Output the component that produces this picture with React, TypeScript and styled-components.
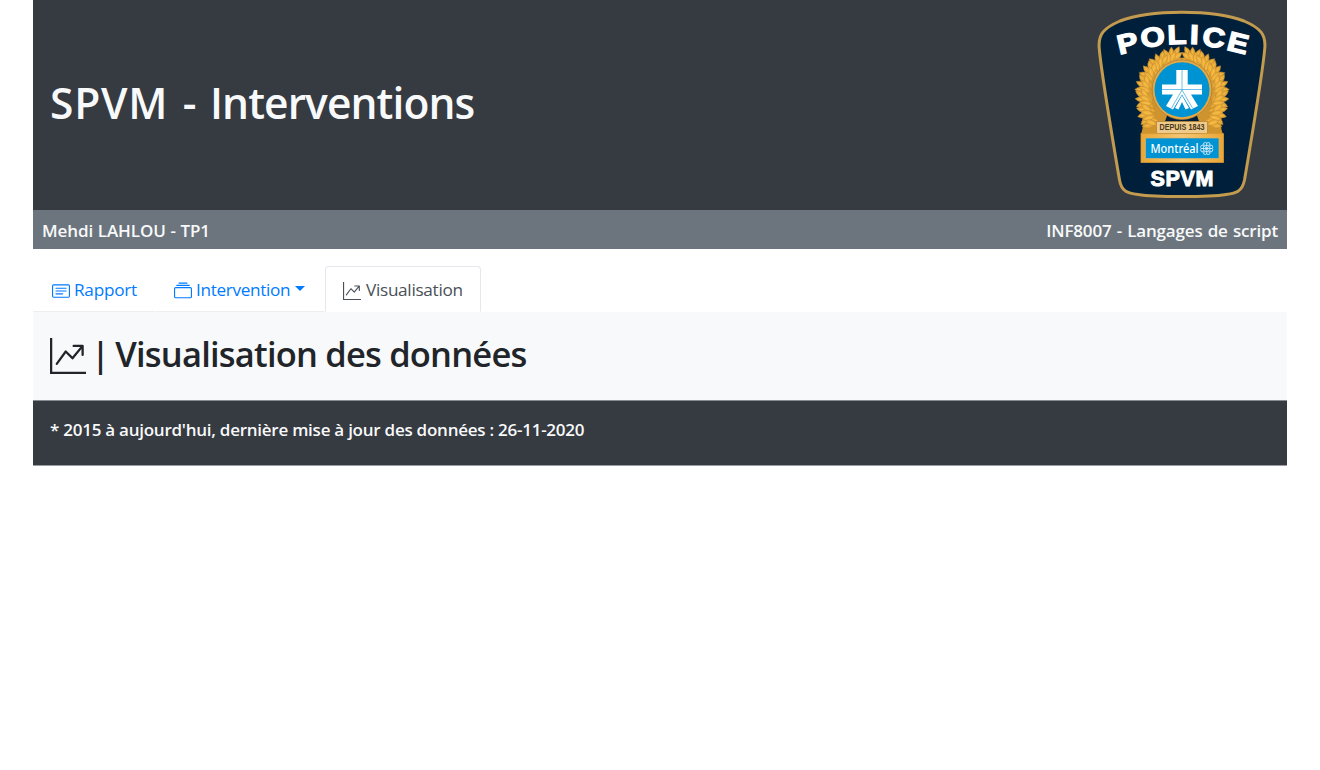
import React from 'react';
import styled, { createGlobalStyle } from 'styled-components';
import { BsCardText, BsCollection, BsGraphUpArrow } from 'react-icons/bs';

const GlobalStyle = createGlobalStyle`
  *, *::before, *::after { box-sizing: border-box; }
  body {
    margin: 0;
    background: #fff;
    color: #212529;
    font-family: 'Open Sans', 'Noto Sans', sans-serif;
    font-size: 17.6px;
    line-height: 1.5;
  }
`;

const Page = styled.div`
  width: 1254px;
  margin-left: 33px;
`;

const Header = styled.header`
  display: flex;
  align-items: center;
  justify-content: space-between;
  height: 210px;
  padding: 0 20px 0 17px;
  background: #363a41;
`;

const Title = styled.h1`
  margin: 0 0 6px;
  color: #f8f9fa;
  font-size: 42.5px;
  font-weight: 600;
  line-height: 1.2;
  white-space: nowrap;
  letter-spacing: -0.9px;
  word-spacing: 4.3px;
`;

const Acronym = styled.span`
  letter-spacing: 0.8px;
`;

const InfoBar = styled.div`
  display: flex;
  align-items: center;
  justify-content: space-between;
  height: 39px;
  padding: 2px 9px 0 9px;
  background: #6c757d;
`;

const Strong = styled.span<{ $spacing: number; $word?: number }>`
  color: #f8f9fa;
  font-size: 17px;
  font-weight: 600;
  white-space: nowrap;
  letter-spacing: ${(p) => p.$spacing}px;
  word-spacing: ${(p) => p.$word ?? 0}px;
`;

const Nav = styled.nav`
  display: flex;
  height: 63px;
  padding-top: 17px;
`;

const Tab = styled.a<{ $active?: boolean; $width: number; $spacing: number }>`
  display: flex;
  align-items: center;
  width: ${(p) => p.$width}px;
  height: 46px;
  padding: 2px 0 0 ${(p) => (p.$active ? 17 : 18)}px;
  border: 1px solid ${(p) => (p.$active ? '#e4e7ec' : 'transparent')};
  border-bottom-color: ${(p) => (p.$active ? 'transparent' : '#eceef0')};
  border-radius: ${(p) => (p.$active ? '4px 4px 0 0' : '0')};
  color: ${(p) => (p.$active ? '#495057' : '#007bff')};
  font-size: 17.2px;
  letter-spacing: ${(p) => p.$spacing}px;
  white-space: nowrap;
  cursor: pointer;

  svg {
    flex: none;
    width: 18px;
    height: 18px;
    margin: 1px ${(p) => (p.$active ? 5 : 4)}px 0 0;
  }
`;

const Caret = styled.span`
  margin: 0 0 4px 5px;
  border: 5.5px solid transparent;
  border-top-color: currentColor;
  border-bottom: 0;
`;

const Content = styled.main`
  display: flex;
  align-items: center;
  height: 89px;
  padding: 0 17px;
  background: #f8f9fb;
  border-bottom: 1px solid #868c91;

  svg {
    flex: none;
    width: 36px;
    height: 36px;
    margin: 0 5px 1px 0;
  }
`;

const Subtitle = styled.h2`
  margin: 0 0 5px;
  font-size: 34.5px;
  font-weight: 600;
  line-height: 1.2;
  white-space: nowrap;
  letter-spacing: -0.8px;
`;

const Bar = styled.span`
  word-spacing: -2px;
`;

const Footer = styled.footer`
  height: 65px;
  padding: 15px 17px 0;
  background: #363a41;
  border-bottom: 1px solid #9b9da0;
`;

const BadgeSvg = styled.svg`
  display: block;
  flex: none;
  width: 170px;
  height: 190px;
`;

/* The badge is drawn in a 170x190 box whose vertical axis is x = 85. */
const letters: [string, number, number, number][] = [
  ['P', 30.5, 33, -13],
  ['O', 55.5, 27, -7],
  ['L', 80, 24.5, -2],
  ['I', 97.5, 24.5, 2],
  ['C', 117, 27.5, 8],
  ['E', 141, 33, 14],
];

const leafRows = [
  { radius: 33, tilt: -85, count: 17, fill: '#dfa031' },
  { radius: 41, tilt: -35, count: 19, fill: '#e6a836' },
  { radius: 37, tilt: -62, count: 19, fill: '#eeb03a' },
];

function Wreath() {
  return (
    <g>
      {[-1, 1].map((side) => (
        <g key={side} transform={`translate(85 83) scale(${side} 1)`}>
          <path d="M4 -39 C26 -40 42 -22 42.500 0 C42.500 18 36 30 41 41 L22 42 L14 20 Z" fill="#d0942f" />
          {leafRows.map((row) =>
            Array.from({ length: row.count }, (_, i) => {
              const angle = -82 + (i * 126) / (row.count - 1);
              const spread = Math.max(0, angle - 15) * 0.2;
              return (
                <g key={`${row.radius}-${i}`} transform={`rotate(${angle}) translate(${row.radius + spread} 0) rotate(${row.tilt + (i % 3) * 20})`}>
                  <path d="M-6 0 Q0 -5.500 6.500 0 Q0 5.500 -6 0Z" fill={row.fill} stroke="#b88430" strokeWidth="0.400" />
                  <path d="M-3 0 L3 0" stroke="#ffd05c" strokeWidth="0.500" />
                </g>
              );
            }),
          )}
        </g>
      ))}
    </g>
  );
}

function Badge() {
  return (
    <BadgeSvg viewBox="0 0 170 190" role="img" aria-label="Police SPVM">
      <defs>
        <linearGradient id="plate" x1="0" x2="1">
          <stop offset="0" stopColor="#eba633" />
          <stop offset="0.5" stopColor="#f4c878" />
          <stop offset="1" stopColor="#eba633" />
        </linearGradient>
      </defs>
      <path
        d="M85 2.2 C58 2.2 37 5.500 23 11 C7 18 1 24 2.2 38 C4 60 14 120 22.5 170 C24.5 182 31 183 41 184.5 C53 186.5 70 186.600 85 186.600 C100 186.600 117 186.5 129 184.5 C139 183 145 182 147.500 170 C156 120 166 60 167.800 38 C169 24 163 18 147 11 C133 5.500 112 2.200 85 2.200Z"
        fill="#001f3a"
        stroke="#c29b4e"
        strokeWidth="3"
      />
      <g fill="#fff" fontFamily="Liberation Sans, sans-serif" fontWeight="700" fontSize="27" textAnchor="middle">
        {letters.map(([ch, x, y, r]) => (
          <text key={ch} transform={`translate(${x} ${y}) rotate(${r}) scale(1.15 1)`} y="9.300" stroke="#fff" strokeWidth="1.4">
            {ch}
          </text>
        ))}
      </g>
      <Wreath />
      <circle cx="85" cy="79.700" r="29.800" fill="#e3a945" stroke="#a87d3c" strokeWidth="0.7" />
      <circle cx="85" cy="79.700" r="27.500" fill="#0093d3" />
      <path d="M79.300 60H90.700V74.500H105V84.500H94L101 96L94 99.500L85 84.500L76 99.500L69 96L76 84.500H65V74.500H79.300Z" fill="#fff" />
      <path d="M78 98L85 85.500L92 98L88.500 99.500L85 92L81.500 99.500Z" fill="#fff" />
      <path d="M85 60V80M65 79.500H105M85 80L74.500 98M85 80L95.500 98" stroke="#4ab1e0" strokeWidth="0.8" />
      <rect x="59.500" y="111.500" width="51" height="12" fill="#eecb8b" stroke="#b98638" strokeWidth="0.8" />
      <text x="85" y="120.300" textAnchor="middle" fontFamily="Liberation Sans Narrow, Liberation Sans, sans-serif" fontWeight="700" fontSize="8.600" fill="#4a3820" textLength="45" lengthAdjust="spacingAndGlyphs">
        DEPUIS 1843
      </text>
      <rect x="44" y="123.700" width="82.500" height="28.800" fill="url(#plate)" stroke="#d59a38" strokeWidth="0.8" />
      <rect x="48.500" y="128" width="73.500" height="20.500" fill="#0093d3" stroke="#d9b26b" strokeWidth="0.700" />
      <text x="53.500" y="143.200" fontFamily="Noto Sans, sans-serif" fontWeight="500" fontSize="12" fill="#fff" textLength="48" lengthAdjust="spacingAndGlyphs">
        Montréal
      </text>
      <g transform="translate(109.700 138.500)" fill="none" stroke="#e4f3fb" strokeWidth="0.8">
        {[0, 90, 180, 270].map((r) => (
          <path key={r} transform={`rotate(${r})`} d="M0 0V-6M0 0L4 -4M0 -3Q-4 -3 -3 -5.500Q-1 -7 0 -5Q1 -7 3 -5.500Q4 -3 0 -3" />
        ))}
      </g>
      <text x="85" y="175.600" textAnchor="middle" fontFamily="Liberation Sans, sans-serif" fontWeight="700" fontSize="21.500" fill="#fff" stroke="#fff" strokeWidth="1" textLength="63" lengthAdjust="spacing">
        SPVM
      </text>
    </BadgeSvg>
  );
}

export default function App() {
  return (
    <>
      <GlobalStyle />
      <Page>
        <Header>
          <Title>
            <Acronym>SPVM</Acronym> - Interventions
          </Title>
          <Badge />
        </Header>
        <InfoBar>
          <Strong $spacing={-0.1} $word={0.4}>Mehdi LAHLOU - TP1</Strong>
          <Strong $spacing={-0.18} $word={1}>INF8007 - Langages de script</Strong>
        </InfoBar>
        <Nav>
          <Tab $width={122} $spacing={-0.25}>
            <BsCardText />
            Rapport
          </Tab>
          <Tab $width={170} $spacing={-0.33}>
            <BsCollection />
            Intervention
            <Caret />
          </Tab>
          <Tab $width={156} $spacing={-0.3} $active>
            <BsGraphUpArrow />
            Visualisation
          </Tab>
        </Nav>
        <Content>
          <BsGraphUpArrow />
          <Subtitle>
            <Bar>| </Bar>Visualisation des données
          </Subtitle>
        </Content>
        <Footer>
          <Strong $spacing={-0.25}>* 2015 à aujourd'hui, dernière mise à jour des données : 26-11-2020</Strong>
        </Footer>
      </Page>
    </>
  );
}
